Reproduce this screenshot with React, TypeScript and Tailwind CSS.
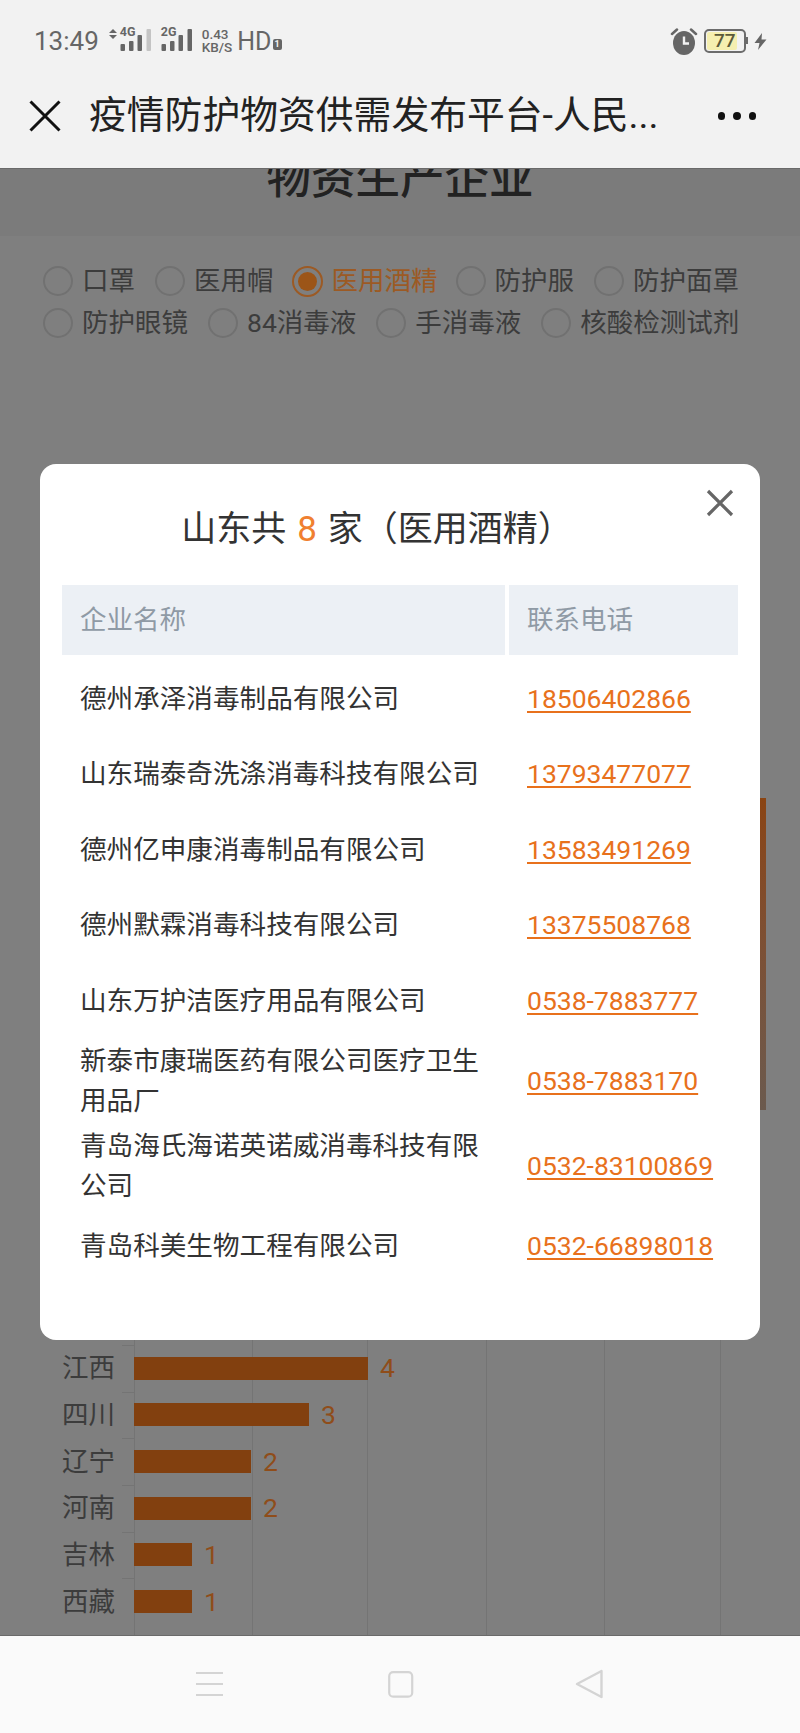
import React from 'react';

const radios = [
  { label: '口罩' },
  { label: '医用帽' },
  { label: '医用酒精', checked: true },
  { label: '防护服' },
  { label: '防护面罩' },
  { label: '防护眼镜' },
  { label: '84消毒液' },
  { label: '手消毒液' },
  { label: '核酸检测试剂' },
];

const companies = [
  { name: '德州承泽消毒制品有限公司', phone: '18506402866' },
  { name: '山东瑞泰奇洗涤消毒科技有限公司', phone: '13793477077' },
  { name: '德州亿申康消毒制品有限公司', phone: '13583491269' },
  { name: '德州默霖消毒科技有限公司', phone: '13375508768' },
  { name: '山东万护洁医疗用品有限公司', phone: '0538-7883777' },
  { name: '新泰市康瑞医药有限公司医疗卫生用品厂', phone: '0538-7883170' },
  { name: '青岛海氏海诺英诺威消毒科技有限公司', phone: '0532-83100869' },
  { name: '青岛科美生物工程有限公司', phone: '0532-66898018' },
];

const provinces = [
  { name: '江西', value: 4, width: 234 },
  { name: '四川', value: 3, width: 175 },
  { name: '辽宁', value: 2, width: 117 },
  { name: '河南', value: 2, width: 117 },
  { name: '吉林', value: 1, width: 58 },
  { name: '西藏', value: 1, width: 58 },
];

const gridLines = [134, 252, 367, 486, 604, 720];

const Signal = ({ label, last }: { label: string; last: string }) => (
  <div className="relative h-[24px] w-[33px]">
    <span className="absolute left-0 top-[-4px] text-[12.5px] font-bold leading-[14px] text-[#666]">{label}</span>
    <svg width="33" height="24" viewBox="0 0 33 24" className="absolute left-0 top-0">
      <rect x="0.5" y="15" width="4.5" height="7" rx="1" fill="#666" />
      <rect x="9" y="12" width="4.5" height="10" rx="1" fill="#666" />
      <rect x="17.5" y="6" width="4.5" height="16" rx="1" fill="#666" />
      <rect x="26.5" y="0" width="4.5" height="22" rx="1" fill={last} />
    </svg>
  </div>
);

const StatusBar = () => (
  <div className="flex h-[60px] items-center justify-between pl-[34px] pr-[33px] pt-[22px] text-[#666]">
    <div className="flex items-center">
      <span className="text-[26px] leading-none">13:49</span>
      <svg width="8" height="10" viewBox="0 0 8 10" className="ml-[10px] mb-[14px]">
        <path d="M4 0 L8 4 L0 4 Z M0 6 L8 6 L4 10 Z" fill="#666" />
      </svg>
      <div className="ml-[3px]">
        <Signal label="4G" last="#c4c4c4" />
      </div>
      <div className="ml-[8px]">
        <Signal label="2G" last="#666" />
      </div>
      <div className="ml-[8px] flex flex-col text-[13.5px] font-medium leading-[13px]">
        <span>0.43</span>
        <span>KB/S</span>
      </div>
      <span className="ml-[5px] text-[25px] leading-none">HD</span>
      <span className="ml-[1px] mt-[6px] flex h-[11px] w-[9px] items-center justify-center rounded-[2px] bg-[#666] text-[9px] font-bold leading-none text-[#f2f2f2]">1</span>
    </div>
    <div className="flex items-center">
      <svg width="28" height="27" viewBox="0 0 28 27">
        <path d="M2 6 L7 1.5 M26 6 L21 1.5" stroke="#666" strokeWidth="2.5" strokeLinecap="round" />
        <ellipse cx="14" cy="15" rx="11" ry="12" fill="#666" />
        <path d="M14 8.5 V15.5 H19" stroke="#f2f2f2" strokeWidth="2.4" fill="none" />
      </svg>
      <div className="relative ml-[6px] h-[24px] w-[42px] rounded-[5px] border-[2px] border-[#6c6c6c] p-[1px]">
        <div className="h-full w-[30px] rounded-[2px] bg-[#f5efb0]" />
        <span className="absolute left-[8px] top-0 text-[19px] font-medium leading-[20px] text-[#5a5a3a]">77</span>
        <span className="absolute right-[-4px] top-[6px] h-[7px] w-[2px] bg-[#6c6c6c]" />
      </div>
      <svg width="13" height="17" viewBox="0 0 13 17" className="ml-[8px]">
        <path d="M8 0 L0.5 10 H5.5 L4 17 L12.5 6.5 H7.5 Z" fill="#666" />
      </svg>
    </div>
  </div>
);

const TopBar = () => (
  <div className="relative z-10 h-[169px] shrink-0 border-b border-[#6a6a6a] bg-[#f2f2f2]">
    <StatusBar />
    <div className="mt-[20px] flex h-[72px] items-center">
      <svg width="32" height="32" viewBox="0 0 32 32" className="ml-[29px]">
        <path d="M1.5 1.5 L30.5 30.5 M30.5 1.5 L1.5 30.5" stroke="#111" strokeWidth="3" />
      </svg>
      <h1 className="ml-[28px] flex-1 text-[37.8px] font-normal leading-none text-[#222]">疫情防护物资供需发布平台-人民...</h1>
      <div className="mr-[44px] flex gap-[8px]">
        <span className="size-[7.5px] rounded-full bg-[#111]" />
        <span className="size-[7.5px] rounded-full bg-[#111]" />
        <span className="size-[7.5px] rounded-full bg-[#111]" />
      </div>
    </div>
  </div>
);

const RadioItem = ({ label, checked }: { label: string; checked?: boolean }) => (
  <div className={checked ? '-mx-[2px] flex h-[42px] items-center gap-[9px]' : 'flex h-[42px] items-center gap-[9px]'}>
    {checked ? (
      <span className="flex size-[31px] items-center justify-center rounded-full border-[2px] border-[#9c5a24]">
        <span className="size-[19px] rounded-full bg-[#9c5518]" />
      </span>
    ) : (
      <span className="size-[30px] rounded-full border-[2px] border-[#717171]" />
    )}
    <span className={checked ? 'text-[#9c5a24]' : 'text-[#3c3c3c]'}>{label}</span>
  </div>
);

const Chart = () => (
  <div className="flex flex-1 flex-col">
    <div className="ml-[134px] mt-[454px] h-[312px] w-[632px] shrink-0 bg-linear-to-b from-[#8a4412] to-[#6b5a4e]" />
    <div className="relative mt-[195px] flex-1 pt-[40px]">
      {gridLines.map((x) => (
        <span key={x} className="absolute bottom-0 top-0 w-px bg-[#747474]" style={{ left: x }} />
      ))}
      {provinces.map((p) => (
        <div key={p.name} className="relative flex h-[46.67px] items-center">
          <span className="absolute left-[122px] top-0 h-px w-[12px] bg-[#747474]" />
          <span className="w-[115px] text-right text-[#3c3c3c]">{p.name}</span>
          <span className="relative ml-[19px] h-[23px] bg-[#82400f]" style={{ width: p.width }} />
          <span className="ml-[12px] text-[#8f4d1a]">{p.value}</span>
        </div>
      ))}
    </div>
  </div>
);

const Modal = () => (
  <div className="absolute left-[40px] top-[464px] z-10 h-[876px] w-[720px] rounded-[16px] bg-white px-[22px]">
    <svg width="28" height="28" viewBox="0 0 28 28" className="absolute left-[666px] top-[25px]">
      <path d="M2 2 L26 26 M26 2 L2 26" stroke="#666" strokeWidth="3.2" />
    </svg>
    <h2 className="flex h-[121px] items-center justify-center pr-[46px] pt-[10px] text-[35px] leading-none text-[#333]">
      山东共<span className="mx-[11px] text-[#f08030]">8</span>家（医用酒精）
    </h2>
    <div className="grid h-[70px] grid-cols-[443px_229px] gap-x-[4px] text-[#8f9aa5]">
      <div className="flex items-center bg-[#ecf0f5] pl-[18px]">企业名称</div>
      <div className="flex items-center bg-[#ecf0f5] pl-[18px]">联系电话</div>
    </div>
    <div className="mt-[4px] flex flex-col gap-[4px] pt-[4px]">
      {companies.map((c) => (
        <div key={c.phone} className="grid min-h-[71.5px] grid-cols-[443px_229px] items-center gap-x-[4px]">
          <div className="pl-[18px] pr-[18px] text-[26.6px] leading-[40.5px] text-[#333]">{c.name}</div>
          <div className="pl-[18px]">
            <a className="text-[#e8711c] underline decoration-2 underline-offset-[3px]">{c.phone}</a>
          </div>
        </div>
      ))}
    </div>
  </div>
);

const NavBar = () => (
  <div className="relative z-10 flex h-[98px] shrink-0 items-center border-t border-[#6a6a6a] bg-[#fafafa] pb-[1px]">
    <svg width="27" height="26" viewBox="0 0 27 26" className="ml-[196px]">
      <path d="M0 2 H27 M0 13 H27 M0 24 H27" stroke="#d4d4d4" strokeWidth="2.2" />
    </svg>
    <svg width="26" height="27" viewBox="0 0 26 27" className="ml-[165px]">
      <rect x="1.2" y="1.2" width="23" height="24.5" rx="4" fill="none" stroke="#d4d4d4" strokeWidth="2.2" />
    </svg>
    <svg width="29" height="30" viewBox="0 0 29 30" className="ml-[161px]">
      <path d="M26.5 2 V28 L2 15 Z" fill="none" stroke="#d4d4d4" strokeWidth="2.4" strokeLinejoin="round" />
    </svg>
  </div>
);

export default function App() {
  return (
    <div className="relative flex h-[1733px] w-[800px] flex-col overflow-hidden bg-[#7f7f7f] text-[26.5px] [font-family:Roboto,'Noto_Sans_CJK_SC',sans-serif]">
      <TopBar />
      <div className="h-[67px] shrink-0 bg-[#7b7b7b] text-center">
        <div className="-mt-[12px] text-[44.5px] font-medium leading-[44px] text-[#222]">物资生产企业</div>
      </div>
      <div className="mt-[24px] flex shrink-0 flex-wrap gap-x-[20px] pl-[43px] pr-[20px]">
        {radios.map((r) => (
          <RadioItem key={r.label} label={r.label} checked={r.checked} />
        ))}
      </div>
      <Chart />
      <Modal />
      <NavBar />
    </div>
  );
}
